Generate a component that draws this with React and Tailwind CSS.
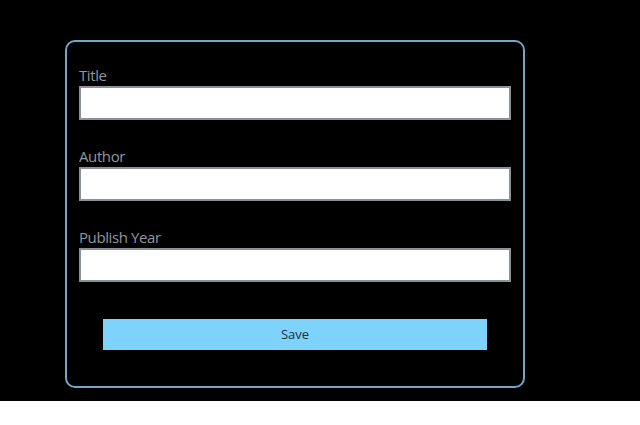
import React from 'react';

const Field = ({ label, className = '' }) => (
  <div className={`flex flex-col ${className}`}>
    <label className="text-[15px] leading-[21px] tracking-[-0.4px] text-[#9096a0]">{label}</label>
    <input
      type="text"
      className="h-[34px] w-full bg-white border-2 border-[#8c9198] outline-none"
    />
  </div>
);

const App = () => {
  return (
    <div className="min-h-screen bg-white" style={{ fontFamily: '"Open Sans", "Liberation Sans", sans-serif' }}>
      <div className="h-[401px] bg-black pt-[40px] pl-[65px]">
        {/* Form card */}
        <div className="w-[460px] h-[348px] border-2 border-[#72a6cb] rounded-[10px] px-[12px] pt-[23px]">
          <Field label="Title" />
          <Field label="Author" className="mt-[26px]" />
          <Field label="Publish Year" className="mt-[26px]" />
          <div className="px-[24px] mt-[37px]">
            <button className="w-full h-[31px] bg-[#7dd3fc] text-[13px] text-[#1f2d3a]">
              Save
            </button>
          </div>
        </div>
      </div>
    </div>
  );
};

export default App;
